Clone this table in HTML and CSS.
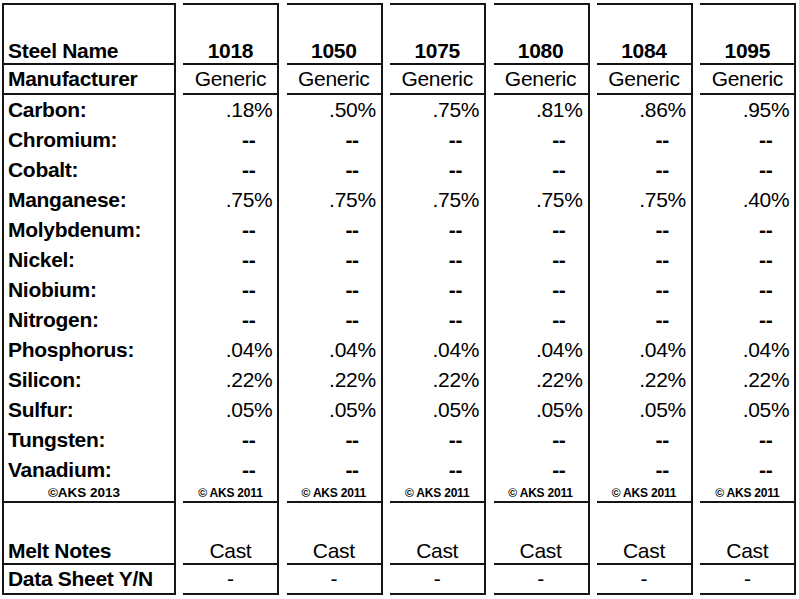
FILE: index.html
```html
<!DOCTYPE html>
<html lang="en">
<head>
<meta charset="utf-8">
<title>Steel Composition</title>
<link rel="stylesheet" href="styles.css">
</head>
<body>
<div class="sheet">
  <div class="cell head label">Steel Name</div>
  <div class="cell head num">1018</div>
  <div class="cell head num">1050</div>
  <div class="cell head num">1075</div>
  <div class="cell head num">1080</div>
  <div class="cell head num">1084</div>
  <div class="cell head num">1095</div>

  <div class="cell mfr label">Manufacturer</div>
  <div class="cell mfr ctr">Generic</div>
  <div class="cell mfr ctr">Generic</div>
  <div class="cell mfr ctr">Generic</div>
  <div class="cell mfr ctr">Generic</div>
  <div class="cell mfr ctr">Generic</div>
  <div class="cell mfr ctr">Generic</div>

  <div class="cell label">Carbon:</div>
  <div class="cell val">.18%</div><div class="cell val">.50%</div><div class="cell val">.75%</div><div class="cell val">.81%</div><div class="cell val">.86%</div><div class="cell val">.95%</div>

  <div class="cell label">Chromium:</div>
  <div class="cell dash">--</div><div class="cell dash">--</div><div class="cell dash">--</div><div class="cell dash">--</div><div class="cell dash">--</div><div class="cell dash">--</div>

  <div class="cell label">Cobalt:</div>
  <div class="cell dash">--</div><div class="cell dash">--</div><div class="cell dash">--</div><div class="cell dash">--</div><div class="cell dash">--</div><div class="cell dash">--</div>

  <div class="cell label">Manganese:</div>
  <div class="cell val">.75%</div><div class="cell val">.75%</div><div class="cell val">.75%</div><div class="cell val">.75%</div><div class="cell val">.75%</div><div class="cell val">.40%</div>

  <div class="cell label">Molybdenum:</div>
  <div class="cell dash">--</div><div class="cell dash">--</div><div class="cell dash">--</div><div class="cell dash">--</div><div class="cell dash">--</div><div class="cell dash">--</div>

  <div class="cell label">Nickel:</div>
  <div class="cell dash">--</div><div class="cell dash">--</div><div class="cell dash">--</div><div class="cell dash">--</div><div class="cell dash">--</div><div class="cell dash">--</div>

  <div class="cell label">Niobium:</div>
  <div class="cell dash">--</div><div class="cell dash">--</div><div class="cell dash">--</div><div class="cell dash">--</div><div class="cell dash">--</div><div class="cell dash">--</div>

  <div class="cell label">Nitrogen:</div>
  <div class="cell dash">--</div><div class="cell dash">--</div><div class="cell dash">--</div><div class="cell dash">--</div><div class="cell dash">--</div><div class="cell dash">--</div>

  <div class="cell label">Phosphorus:</div>
  <div class="cell val">.04%</div><div class="cell val">.04%</div><div class="cell val">.04%</div><div class="cell val">.04%</div><div class="cell val">.04%</div><div class="cell val">.04%</div>

  <div class="cell label">Silicon:</div>
  <div class="cell val">.22%</div><div class="cell val">.22%</div><div class="cell val">.22%</div><div class="cell val">.22%</div><div class="cell val">.22%</div><div class="cell val">.22%</div>

  <div class="cell label">Sulfur:</div>
  <div class="cell val">.05%</div><div class="cell val">.05%</div><div class="cell val">.05%</div><div class="cell val">.05%</div><div class="cell val">.05%</div><div class="cell val">.05%</div>

  <div class="cell label">Tungsten:</div>
  <div class="cell dash">--</div><div class="cell dash">--</div><div class="cell dash">--</div><div class="cell dash">--</div><div class="cell dash">--</div><div class="cell dash">--</div>

  <div class="cell label">Vanadium:</div>
  <div class="cell dash">--</div><div class="cell dash">--</div><div class="cell dash">--</div><div class="cell dash">--</div><div class="cell dash">--</div><div class="cell dash">--</div>

  <div class="cell copy first">&copy;AKS 2013</div>
  <div class="cell copy">&copy; AKS 2011</div><div class="cell copy">&copy; AKS 2011</div><div class="cell copy">&copy; AKS 2011</div><div class="cell copy">&copy; AKS 2011</div><div class="cell copy">&copy; AKS 2011</div><div class="cell copy">&copy; AKS 2011</div>

  <div class="cell melt label">Melt Notes</div>
  <div class="cell melt ctr">Cast</div><div class="cell melt ctr">Cast</div><div class="cell melt ctr">Cast</div><div class="cell melt ctr">Cast</div><div class="cell melt ctr">Cast</div><div class="cell melt ctr">Cast</div>

  <div class="cell data label">Data Sheet Y/N</div>
  <div class="cell data ctr">-</div><div class="cell data ctr">-</div><div class="cell data ctr">-</div><div class="cell data ctr">-</div><div class="cell data ctr">-</div><div class="cell data ctr">-</div>
</div>
</body>
</html>
```

FILE: styles.css
```css
html, body {
  margin: 0;
  padding: 0;
  background: #fff;
}

body {
  font-family: "Liberation Sans", Arial, sans-serif;
  color: #000;
}

.sheet {
  display: grid;
  grid-template-columns: 174px repeat(6, 96px);
  grid-template-rows: 62px 30px repeat(13, 30px) 18px 62px 30px;
  column-gap: 7.4px;
  padding: 3px 0 0 2px;
}

.cell {
  box-sizing: border-box;
  border-right: 2px solid #151515;
  display: flex;
  align-items: center;
  font-size: 21px;
  line-height: 24px;
  letter-spacing: -0.3px;
  white-space: nowrap;
  overflow: hidden;
}

.label {
  font-weight: bold;
  padding-left: 4px;
  border-left: 2px solid #151515;
}

.head {
  border-top: 2px solid #151515;
  border-bottom: 2px solid #151515;
  align-items: flex-end;
}

.num {
  font-weight: bold;
  justify-content: center;
}

.mfr {
  border-bottom: 2px solid #151515;
}

.ctr {
  justify-content: center;
}

.val {
  justify-content: flex-end;
  padding-right: 5px;
}

.dash {
  justify-content: flex-end;
  padding-right: 22px;
  font-weight: bold;
}

.copy {
  font-size: 12px;
  line-height: 14px;
  font-weight: bold;
  letter-spacing: -0.2px;
  justify-content: center;
  border-bottom: 2px solid #151515;
}

.copy.first {
  font-size: 13.5px;
  letter-spacing: 0;
  border-left: 2px solid #151515;
  padding-right: 10px;
}

.melt {
  align-items: flex-end;
  border-bottom: 2px solid #151515;
}

.data {
  border-bottom: 2px solid #151515;
}
```
